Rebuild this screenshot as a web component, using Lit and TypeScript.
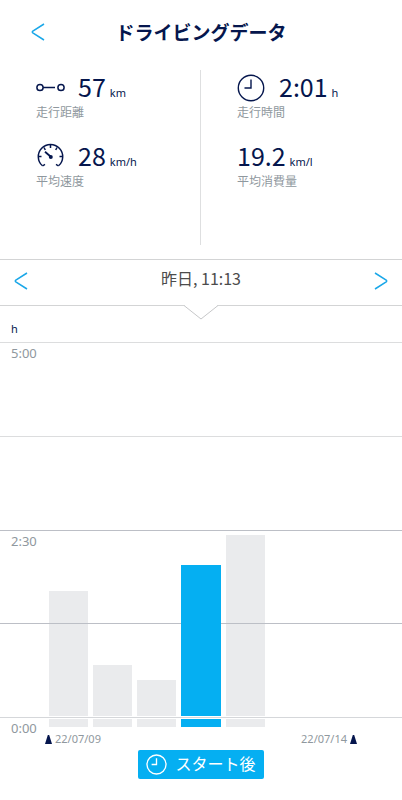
import { LitElement, html, css, svg, nothing } from "lit";
import { customElement, property, state } from "lit/decorators.js";
import { classMap } from "lit/directives/class-map.js";

const clockShape = svg`
  <circle cx="14" cy="14" r="12.7"></circle>
  <path d="M14 5.5V14H7.5"></path>`;

const icons: Record<string, unknown> = {
  distance: html`<svg width="30" height="28" viewBox="0 0 30 28" fill="none" stroke="currentColor" stroke-width="1.5" aria-hidden="true">
    <circle cx="4" cy="13.5" r="3.1"></circle><circle cx="25" cy="13.5" r="3.1"></circle><path d="M7 13.5H19"></path>
  </svg>`,
  clock: html`<svg width="30" height="28" viewBox="0 0 30 28" fill="none" stroke="currentColor" stroke-width="1.4" aria-hidden="true">${clockShape}</svg>`,
  gauge: html`<svg width="30" height="28" viewBox="0 0 30 28" fill="none" stroke="currentColor" stroke-width="1.5" aria-hidden="true">
    <path d="M6.5 22.800A12.200 12.200 0 1 1 22.500 22.800"></path>
    <path d="M14.500 2V5M8 4.500L9.300 7M21 4.500L19.700 7M2.500 13.500H5.500M26.500 13.500H23.500M6.500 23L9 21.300M22.500 23L20 21.300"></path>
    <path d="M9 8.800L14.500 13.500" stroke-width="1.800"></path>
    <circle cx="14.800" cy="14" r="2" fill="currentColor" stroke="none"></circle>
  </svg>`,
};

@customElement("drive-stat")
export class DriveStat extends LitElement {
  @property() value = "";
  @property() unit = "";
  @property() label = "";
  @property() icon = "";

  static styles = css`
    :host { display: block; }
    .row { display: flex; align-items: center; gap: 12px; height: 32px; color: #05164d; }
    .row svg { flex: none; }
    .reading { display: flex; align-items: baseline; gap: 4px; padding-top: 2px; line-height: 32px; }
    .value { font-size: 25px; }
    .unit { font-family: "Noto Sans", sans-serif; font-size: 11px; }
    .label { font-size: 12px; line-height: 16px; color: #8f989e; }
  `;

  render() {
    return html`
      <div class="row">
        ${this.icon ? icons[this.icon] : nothing}
        <div class="reading"><span class="value">${this.value}</span><span class="unit">${this.unit}</span></div>
      </div>
      <div class="label">${this.label}</div>
    `;
  }
}

@customElement("trip-chart")
export class TripChart extends LitElement {
  @property({ attribute: false }) trips: number[] = [];
  @property({ type: Number }) selected = 0;
  @property({ type: Number }) max = 300;

  static styles = css`
    :host { display: block; font-family: "Noto Sans", sans-serif; }
    .unit { padding: 10px 11px 0; font-size: 11px; line-height: 26px; color: #05164d; }
    .plot { display: grid; height: 375px; }
    .grid { grid-area: 1 / 1; display: grid; grid-template-rows: repeat(4, 1fr); position: relative; z-index: 1; pointer-events: none; }
    .line { border-top: 1px solid #dcddde; padding-left: 11px; }
    .line.dark { border-color: #bcbfc6; }
    .tick { font-size: 13px; line-height: 20px; color: #8f989e; }
    .bars { grid-area: 1 / 1; display: grid; grid-template-columns: repeat(7, 1fr); column-gap: 5px; align-items: end; margin: 0 49px; padding-bottom: 1px; }
    .bar { padding: 0; border: 0; background: #eaebed; cursor: pointer; }
    .bar.on { background: #05aff2; position: relative; z-index: 2; }
    .foot { display: flex; border-top: 1px solid #d5d7da; }
    .foot .tick { box-sizing: border-box; width: 45px; padding-left: 11px; }
    .under { flex: 1; padding-right: 45px; }
    .stubs { display: grid; grid-template-columns: repeat(7, 1fr); column-gap: 5px; margin: 1px 4px 0; }
    .stub { height: 8px; background: #eaebed; }
    .stub.on { background: #05aff2; }
    .dates { display: flex; justify-content: space-between; margin-top: 4px; font-size: 11px; line-height: 16px; color: #8f989e; }
    .date { display: flex; align-items: center; gap: 3px; }
    .date svg { fill: #05164d; }
  `;

  render() {
    const marker = html`<svg width="7" height="9" viewBox="0 0 7 9" aria-hidden="true"><path d="M2.800 0H4.200L7 9H0Z"></path></svg>`;
    return html`
      <div class="unit">h</div>
      <div class="plot">
        <div class="grid">
          <div class="line"><div class="tick">5:00</div></div>
          <div class="line"></div>
          <div class="line dark"><div class="tick">2:30</div></div>
          <div class="line dark"></div>
        </div>
        <div class="bars">
          ${this.trips.map((m, i) => html`<button
            class=${classMap({ bar: true, on: i === this.selected })}
            style="height:${(m / this.max) * 100}%"
            aria-label="${Math.floor(m / 60)}:${String(m % 60).padStart(2, "0")} h"
            @click=${() => this.dispatchEvent(new CustomEvent("pick", { detail: i }))}></button>`)}
        </div>
      </div>
      <div class="foot">
        <div class="tick">0:00</div>
        <div class="under">
          <div class="stubs">
            ${this.trips.map((_, i) => html`<div class=${classMap({ stub: true, on: i === this.selected })}></div>`)}
          </div>
          <div class="dates">
            <div class="date">${marker}22/07/09</div>
            <div class="date">22/07/14${marker}</div>
          </div>
        </div>
      </div>
    `;
  }
}

@customElement("app-root")
export class AppRoot extends LitElement {
  @state() private selected = 3;
  private trips = [100, 41, 29, 121, 145];

  static styles = css`
    :host { display: block; min-height: 100vh; background: #fff; font-family: "Noto Sans CJK JP", "Noto Sans", sans-serif; }
    button { font: inherit; border: 0; background: none; cursor: pointer; }
    .top { display: grid; grid-template-columns: 60px 1fr 60px; align-items: center; height: 64px; }
    .title { margin: 0; font-size: 19px; line-height: 28px; font-weight: 700; text-align: center; color: #05164d; }
    .arrow { display: flex; padding: 8px 14px; color: #1aa7e8; }
    .top .arrow { padding-left: 31px; }
    .stats { display: grid; grid-template-columns: 1fr 1fr; padding-top: 6px; }
    .col { display: flex; flex-direction: column; gap: 21px; box-sizing: border-box; height: 175px; padding: 2px 36px 0; }
    .col:first-child { border-right: 1px solid #dedfe0; }
    .nav { position: relative; display: flex; align-items: center; justify-content: space-between; box-sizing: border-box; height: 47px; padding-bottom: 4px; margin-top: 14px; border: 1px solid #d3d4d5; border-width: 1px 0; }
    .when { font-size: 16px; line-height: 24px; padding-bottom: 6px; color: #4c4c4c; }
    .notch { position: absolute; top: 100%; left: 50%; transform: translateX(-50%); }
    .after { display: flex; align-items: center; gap: 8px; width: fit-content; height: 29px; margin: 3px auto 0; padding: 0 8px; border-radius: 2px; background: #05aff2; color: #fff; font-size: 16px; line-height: 24px; }
    .after span { padding-bottom: 4px; }
  `;

  private step(by: number) {
    this.selected = Math.max(0, Math.min(this.trips.length - 1, this.selected + by));
  }

  private chevron(d: string) {
    return html`<svg width="14" height="18" viewBox="0 0 14 18" fill="none" stroke="currentColor" stroke-width="1.5" stroke-linejoin="round" aria-hidden="true"><path d=${d}></path></svg>`;
  }

  render() {
    const left = "M13 1L1.800 8.200Q0.800 9 1.800 9.800L13 17";
    const right = "M1 1L12.200 8.200Q13.200 9 12.200 9.800L1 17";
    return html`
      <header class="top">
        <button class="arrow" aria-label="戻る">${this.chevron(left)}</button>
        <h1 class="title">ドライビングデータ</h1>
      </header>
      <section class="stats">
        <div class="col">
          <drive-stat icon="distance" value="57" unit="km" label="走行距離"></drive-stat>
          <drive-stat icon="gauge" value="28" unit="km/h" label="平均速度"></drive-stat>
        </div>
        <div class="col">
          <drive-stat icon="clock" value="2:01" unit="h" label="走行時間"></drive-stat>
          <drive-stat value="19.2" unit="km/l" label="平均消費量"></drive-stat>
        </div>
      </section>
      <nav class="nav">
        <button class="arrow" aria-label="前へ" @click=${() => this.step(-1)}>${this.chevron(left)}</button>
        <div class="when">昨日, 11:13</div>
        <button class="arrow" aria-label="次へ" @click=${() => this.step(1)}>${this.chevron(right)}</button>
        <svg class="notch" width="36" height="15" viewBox="0 0 36 15" aria-hidden="true">
          <path d="M1 0H35L18 14Z" fill="#fff"></path>
          <path d="M1 0.500L18 14L35 0.500" fill="none" stroke="#c6c7c9"></path>
        </svg>
      </nav>
      <trip-chart .trips=${this.trips} .selected=${this.selected} @pick=${(e: CustomEvent) => (this.selected = e.detail)}></trip-chart>
      <button class="after">
        <svg width="21" height="21" viewBox="0 0 28 28" fill="none" stroke="currentColor" stroke-width="1.800" aria-hidden="true">${clockShape}</svg>
        <span>スタート後</span>
      </button>
    `;
  }
}
